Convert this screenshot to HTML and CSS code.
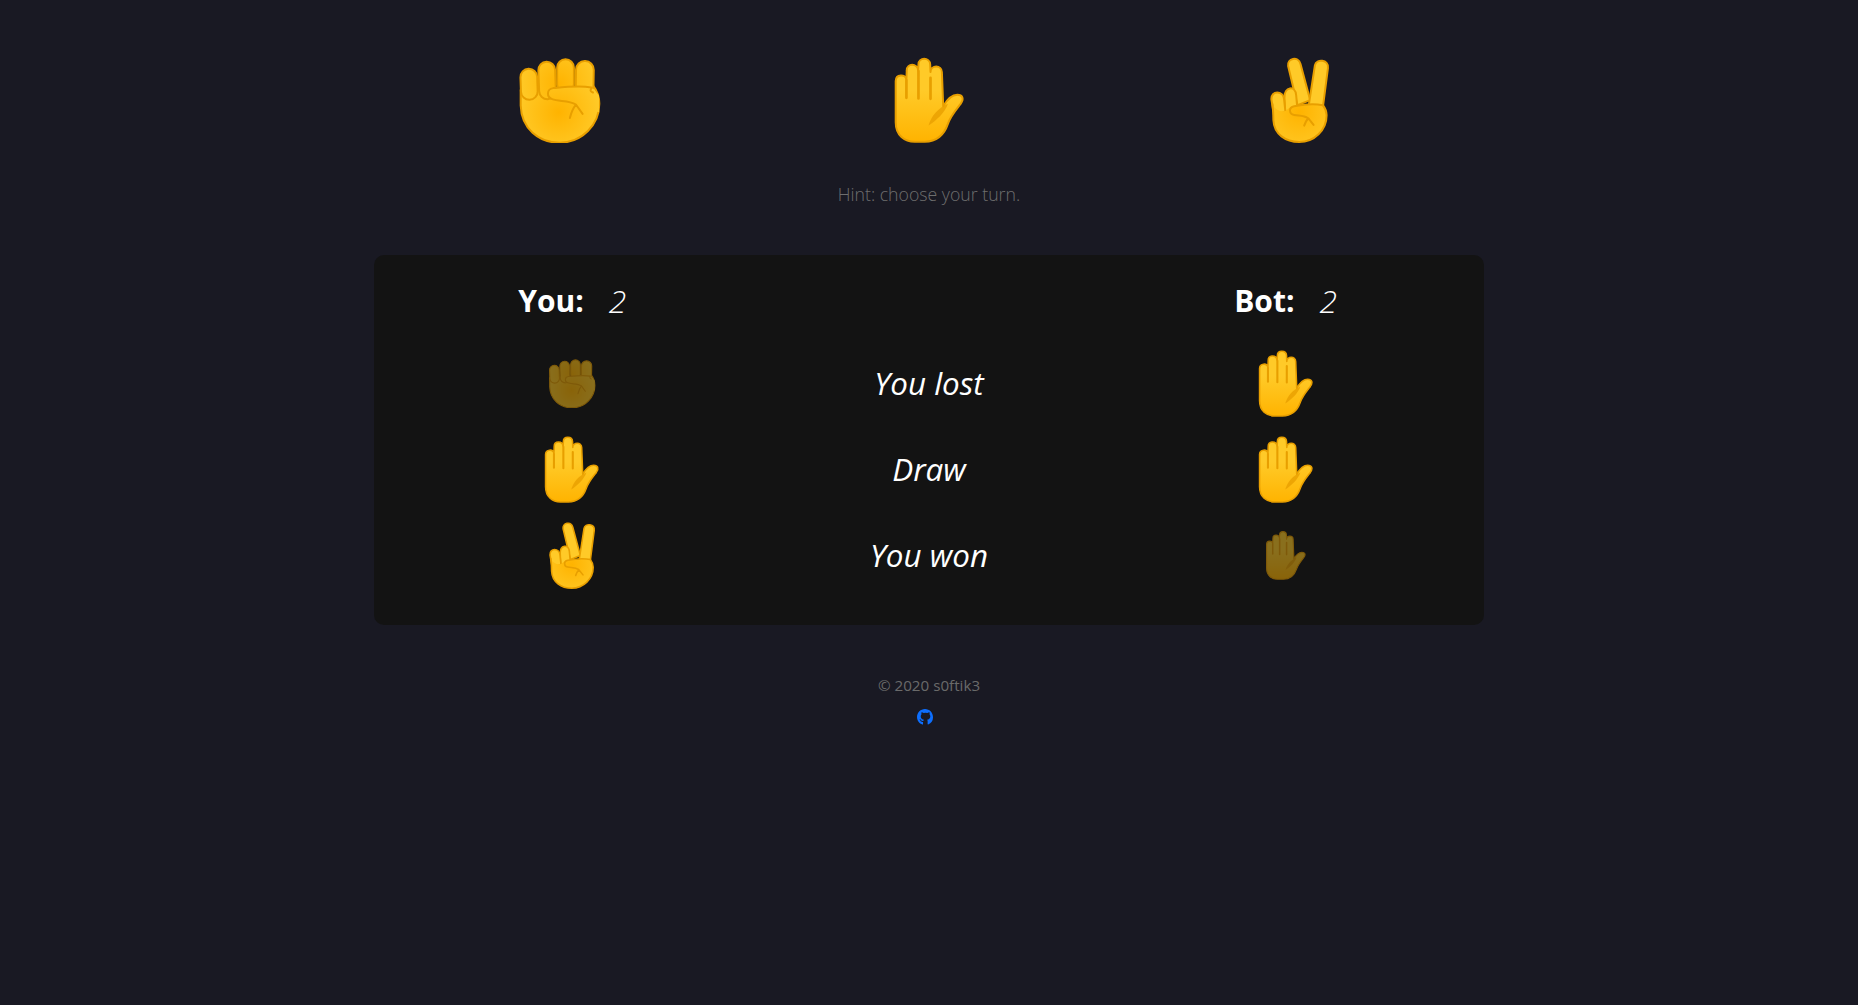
FILE: index.html
```html
<!DOCTYPE html>
<html lang="en">
<head>
<meta charset="utf-8">
<title>Rock Paper Scissors</title>
<link rel="stylesheet" href="styles.css">
</head>
<body>
<svg class="defs" aria-hidden="true">
  <defs>
    <radialGradient id="skin" gradientUnits="userSpaceOnUse" cx="175" cy="215" r="125">
      <stop offset="0" stop-color="#ffb300"/>
      <stop offset="1" stop-color="#ffca28"/>
    </radialGradient>
    <radialGradient id="knuckle" gradientUnits="userSpaceOnUse" cx="175" cy="130" r="120">
      <stop offset="0" stop-color="#ffb300"/>
      <stop offset="1" stop-color="#ffca28"/>
    </radialGradient>
    <linearGradient id="palm" gradientUnits="userSpaceOnUse" x1="0" y1="150" x2="0" y2="305">
      <stop offset="0" stop-color="#ffca28"/>
      <stop offset="1" stop-color="#ffb300"/>
    </linearGradient>
    <symbol id="rock" viewBox="47 47 260 260">
      <path d="M61 170 L61 195 C63 264 115 306 177 306 C245 306 296 252 296 190 C296 165 287 148 277 135 L61 150 Z" fill="url(#skin)" stroke="#e89f00" stroke-width="6"/>
      <g fill="url(#knuckle)" stroke="#e89f00" stroke-width="6">
        <rect x="61" y="85" width="50" height="93" rx="25" transform="rotate(-2 87 130)"/>
        <rect x="115" y="64" width="50" height="112" rx="25" transform="rotate(-2 140 120)"/>
        <rect x="170" y="57" width="50" height="100" rx="25"/>
        <rect x="226" y="62" width="53" height="100" rx="26" transform="rotate(1 252 110)"/>
      </g>
      <path d="M278 145 C235 135 190 140 158 143 C138 146 138 170 155 176 C175 184 205 178 226 192 L295 215 L295 165 Z" fill="url(#skin)"/>
      <path d="M277 156 C264 150 272 150 272 141 C235 135 190 140 158 143 C138 146 138 170 155 176 C175 184 205 178 226 192 L246 220 M208 232 C212 216 218 202 226 192" fill="none" stroke="#e89f00" stroke-width="6" stroke-linecap="round" stroke-linejoin="round"/>
    </symbol>
    <symbol id="paper" viewBox="49 47 260 260">
      <path d="M78 122 C78 100 108 100 110 118 L111 90 C111 68 143 68 145 90 L146 72 C146 50 180 50 181 72 L182 95 C182 73 216 73 216 95 L220 197 C230 180 245 163 262 163 C278 163 283 175 272 190 C258 208 241 228 234 250 C222 285 200 303 165 303 L135 303 C105 303 78 285 78 245 Z" fill="url(#palm)" stroke="#e89f00" stroke-width="6" stroke-linejoin="round"/>
      <path d="M110 120 L110 172 M146 92 L146 174 M182 112 L182 175" fill="none" stroke="#e89f00" stroke-width="8" stroke-linecap="round"/>
      <path d="M176 255 C185 225 205 203 234 190 C226 215 200 240 176 255 Z" fill="#e89f00" opacity=".8"/>
    </symbol>
    <symbol id="scissors" viewBox="46 48 260 260">
      <g fill="#ffca28" stroke="#e89f00" stroke-width="6" stroke-linejoin="round">
        <path d="M142 78 C138 55 172 47 179 72 L208 180 L170 195 Z"/>
        <path d="M222 76 C226 55 264 58 261 84 L246 200 L203 200 Z"/>
        <path d="M131 172 C130 140 164 134 166 165 L170 210 L133 215 Z"/>
        <path d="M92 178 C90 150 128 150 130 178 L134 215 L100 225 Z"/>
      </g>
      <path d="M96 196 C98 210 98 225 98 240 C100 282 135 305 175 305 C220 305 257 270 257 225 C257 213 252 203 246 195 C215 190 180 195 150 200 L134 212 C118 216 108 210 96 196 Z" fill="url(#skin)"/>
      <path d="M95 190 C97 205 98 220 98 240 C100 282 135 305 175 305 C220 305 257 270 257 225 C257 213 252 203 246 195" fill="none" stroke="#e89f00" stroke-width="6"/>
      <path d="M246 195 C215 189 185 193 160 198 C142 202 145 222 160 224 C175 227 188 224 202 234 L218 254 M190 256 C193 246 197 240 202 234" fill="none" stroke="#e89f00" stroke-width="6" stroke-linecap="round" stroke-linejoin="round"/>
    </symbol>
  </defs>
</svg>

<main class="container">
  <section class="choices">
    <div class="choice"><svg class="emoji emoji-lg"><use href="#rock"/></svg></div>
    <div class="choice"><svg class="emoji emoji-lg"><use href="#paper"/></svg></div>
    <div class="choice"><svg class="emoji emoji-lg"><use href="#scissors"/></svg></div>
  </section>

  <p class="hint">Hint: choose your turn.</p>

  <section class="board">
    <div class="row row-head">
      <div class="cell score"><b>You:</b><i>2</i></div>
      <div class="cell"></div>
      <div class="cell score"><b>Bot:</b><i>2</i></div>
    </div>
    <div class="row">
      <div class="cell"><svg class="emoji emoji-dim"><use href="#rock"/></svg></div>
      <div class="cell result">You lost</div>
      <div class="cell"><svg class="emoji emoji-md"><use href="#paper"/></svg></div>
    </div>
    <div class="row">
      <div class="cell"><svg class="emoji emoji-md"><use href="#paper"/></svg></div>
      <div class="cell result">Draw</div>
      <div class="cell"><svg class="emoji emoji-md"><use href="#paper"/></svg></div>
    </div>
    <div class="row">
      <div class="cell"><svg class="emoji emoji-md"><use href="#scissors"/></svg></div>
      <div class="cell result">You won</div>
      <div class="cell"><svg class="emoji emoji-dim"><use href="#paper"/></svg></div>
    </div>
  </section>

  <footer class="footer">
    <div class="copy">© 2020 s0ftik3</div>
    <a class="git" href="#" aria-label="GitHub">
      <svg class="git-icon" viewBox="0 0 16 16"><path fill="#0d6efd" d="M8 0C3.58 0 0 3.58 0 8c0 3.54 2.29 6.53 5.47 7.59.4.07.55-.17.55-.38v-2.3c-1.2.2-2.1-.2-2.7-1.4-.2-.4-.5-.7-.8-.9-.3-.2-.1-.4.3-.4.6.1 1 .5 1.3 1 .5.8 1.3 1 2.3.6.1-.5.3-.9.6-1.1-1.8-.2-3.3-1-3.3-3.5 0-.8.3-1.5.8-2-.1-.3-.3-1.1.1-2 0 0 .7-.2 2.1.8a7 7 0 0 1 3.6 0c1.4-1 2.1-.8 2.1-.8.4.9.2 1.7.1 2 .5.5.8 1.2.8 2 0 2.5-1.5 3.3-3.3 3.5.4.3.6.8.6 1.5v2.9c0 .21.15.46.55.38A8 8 0 0 0 16 8c0-4.42-3.58-8-8-8z"/></svg>
    </a>
  </footer>
</main>
</body>
</html>
```
FILE: styles.css
```css
* { box-sizing: border-box; }
html, body { height: 100%; }
body {
  margin: 0;
  background: #191923;
  color: #fff;
  font-family: "Open Sans", "Noto Sans", sans-serif;
}
.defs { position: absolute; width: 0; height: 0; }
.container {
  width: 1110px;
  margin: 0 auto;
  padding-top: 56px;
}
.choices { display: grid; grid-template-columns: repeat(3, 1fr); }
.choice { display: flex; justify-content: center; }
.emoji { display: block; }
.emoji-lg { width: 87px; height: 87px; }
.emoji-md { width: 68px; height: 68px; }
.emoji-dim { width: 50px; height: 50px; opacity: .5; }
.hint {
  margin: 37px 0 0;
  height: 28px;
  line-height: 28px;
  text-align: center;
  font-size: 17.7px;
  font-weight: 300;
  color: #6e6e6e;
}
.board {
  margin-top: 47px;
  height: 370px;
  padding: 25px 20px 27px;
  background: #131313;
  border-radius: 10px;
}
.row { display: grid; grid-template-columns: repeat(3, 1fr); height: 86px; }
.row-head { height: 40px; margin-bottom: 20px; }
.cell { display: flex; align-items: center; justify-content: center; }
.score { font-size: 30px; gap: 25px; padding-bottom: 2px; }
.score b { font-weight: 700; }
.score i { font-size: 32px; font-weight: 300; line-height: 1; }
.result { font-size: 31.4px; font-style: italic; font-weight: 400; padding-bottom: 2px; }
.footer { margin-top: 48px; text-align: center; }
.copy { font-size: 15.2px; line-height: 24px; color: #6a6a6a; }
.git { display: block; width: 16px; height: 16px; margin: 12px 0 0 543px; }
.git-icon { display: block; width: 16px; height: 16px; }
```
